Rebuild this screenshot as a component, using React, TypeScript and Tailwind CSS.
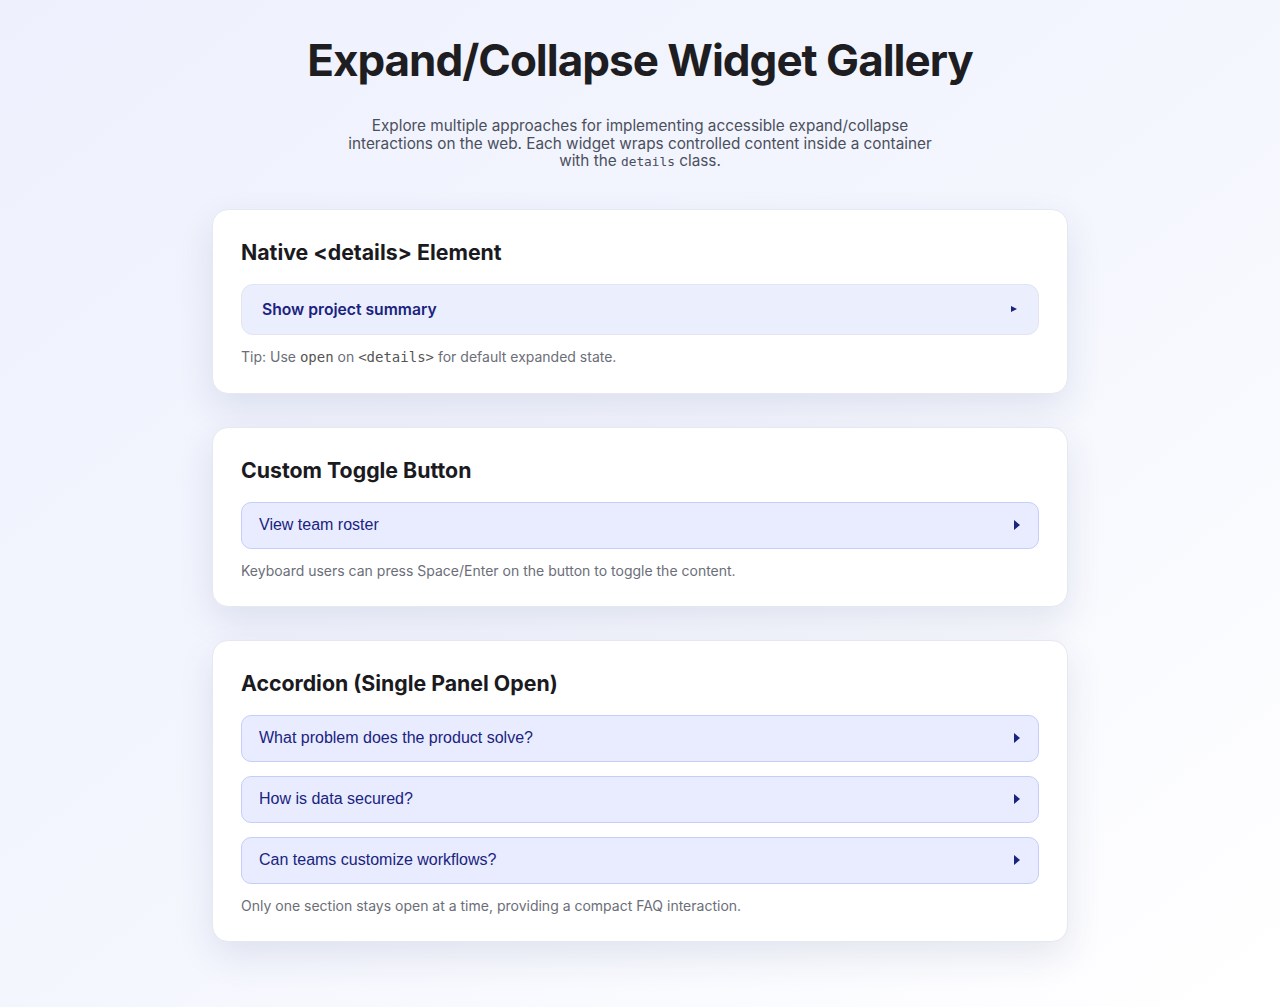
import React, { useState } from "react";

const inter = { fontFamily: "Inter, 'Noto Sans', sans-serif" };

function Caret({ small = false }: { small?: boolean }) {
  if (small) {
    return (
      <svg width="6" height="6" viewBox="0 0 6 6" className="shrink-0">
        <path d="M0 0 L6 3 L0 6 Z" fill="#1a237e" />
      </svg>
    );
  }
  return (
    <svg width="6" height="10" viewBox="0 0 6 10" className="shrink-0">
      <path d="M0 0 L6 5 L0 10 Z" fill="#1a237e" />
    </svg>
  );
}

function Card({ title, children }: { title: string; children: React.ReactNode }) {
  return (
    <section className="rounded-2xl border border-[#e6e8f0] bg-white px-7 pt-7 pb-[25px] shadow-[0_14px_36px_rgba(40,52,110,0.11)]">
      <h2 className="mb-[18px] text-[21.3px] font-bold leading-7 text-[#1a1a1f]">{title}</h2>
      {children}
    </section>
  );
}

function ToggleButton({ label }: { label: string }) {
  const [open, setOpen] = useState(false);
  return (
    <button
      type="button"
      aria-expanded={open}
      onClick={() => setOpen(!open)}
      className="flex h-[47px] w-full items-center justify-between rounded-[10px] border border-[#c5cdfb] bg-[#e8ecfe] pl-[17px] pr-[18px] text-left text-[16px] text-[#1a237e]"
      style={{ fontFamily: "'Liberation Sans', Arial, sans-serif" }}
    >
      <span>{label}</span>
      <Caret />
    </button>
  );
}

const mono = "font-['DejaVu_Sans_Mono',monospace]";

export default function App() {
  return (
    <div
      className="min-h-screen bg-gradient-to-br from-[#eef1fd] via-[#f4f6fe] to-[#ffffff] pb-16"
      style={inter}
    >
      <header className="mx-auto flex max-w-[900px] flex-col items-center pt-[31px] text-center">
        <h1 className="text-[44px] font-bold leading-[58px] tracking-[-1px] text-[#1d1d22]">
          Expand/Collapse Widget Gallery
        </h1>
        <p className="mt-[28px] max-w-[600px] text-[15.3px] leading-[17.6px] text-[#4b4f5c]">
          Explore multiple approaches for implementing accessible expand/collapse interactions on the
          web. Each widget wraps controlled content inside a container with the{" "}
          <code className={`${mono} text-[12.8px] leading-none`}>details</code> class.
        </p>
      </header>

      <main className="mx-auto mt-[39px] flex w-[856px] flex-col gap-[33px]">
        <Card title="Native <details> Element">
          <details className="group">
            <summary className="flex h-[51px] cursor-pointer list-none items-center justify-between rounded-xl border border-[#e2e4ee] bg-[#ebeefd] pl-5 pr-[21px] text-[15.7px] font-semibold text-[#1a237e] [&::-webkit-details-marker]:hidden">
              <span>Show project summary</span>
              <Caret small />
            </summary>
          </details>
          <p className="mt-[11px] text-[14px] leading-[21px] text-[#6b6e78]">
            Tip: Use <code className={`${mono} text-[14px] text-[#555]`}>open</code> on{" "}
            <code className={`${mono} text-[14px] text-[#555]`}>&lt;details&gt;</code> for default
            expanded state.
          </p>
        </Card>

        <Card title="Custom Toggle Button">
          <ToggleButton label="View team roster" />
          <p className="mt-[11px] text-[14px] leading-[21px] text-[#6b6e78]">
            Keyboard users can press Space/Enter on the button to toggle the content.
          </p>
        </Card>

        <Card title="Accordion (Single Panel Open)">
          <div className="flex flex-col gap-[14px]">
            <ToggleButton label="What problem does the product solve?" />
            <ToggleButton label="How is data secured?" />
            <ToggleButton label="Can teams customize workflows?" />
          </div>
          <p className="mt-[11px] text-[14px] leading-[21px] text-[#6b6e78]">
            Only one section stays open at a time, providing a compact FAQ interaction.
          </p>
        </Card>
      </main>
    </div>
  );
}
